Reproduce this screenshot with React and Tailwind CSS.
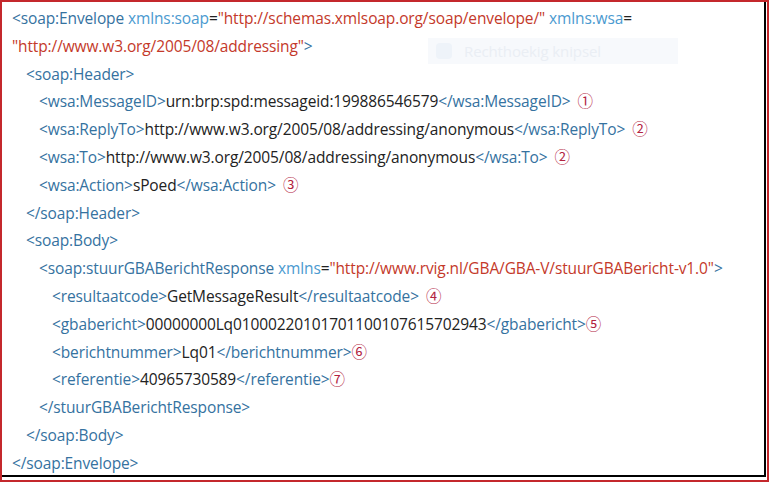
const font = { fontFamily: '"Open Sans", "Noto Sans", "Noto Sans CJK JP", sans-serif' }

function T({ children }) {
  return <span className="text-[#35729f]">{children}</span>
}
function A({ children }) {
  return <span className="text-[#4b9ad0]">{children}</span>
}
function S({ children }) {
  return <span className="text-[#c4392a]">{children}</span>
}
function N({ children, gap = true }) {
  return <span className={`text-[#b3233f] ${gap ? "ml-[7px]" : ""}`}>{children}</span>
}

const pad = ["pl-[10px]", "pl-[24px]", "pl-[37px]", "pl-[50px]"]

function Line({ level, children }) {
  return <div className={`h-[27.8px] leading-[27.8px] whitespace-nowrap ${pad[level]}`}>{children}</div>
}

export default function App() {
  return (
    <div className="w-[769px] h-[482px] bg-white border-2 border-[#c4282c] pr-px pb-[3px]">
      <div
        className="relative w-full h-full border-r-2 border-b-2 border-black text-[15.5px] text-[#222] tracking-[-0.12px] pt-[3px]"
        style={font}
      >
        <div className="absolute left-[426px] top-[36px] w-[250px] h-[26px] bg-[#f7f9fc] flex items-center gap-3 px-2 text-[15px] text-[#eaeef4]">
          <span className="w-4 h-4 bg-[#eef3f9] rounded-sm" />
          Rechthoekig knipsel
        </div>
        <div className="relative">
          <Line level={0}>
            <T>&lt;soap:Envelope </T><A>xmlns:soap</A>=<S>"http://schemas.xmlsoap.org/soap/envelope/"</S> <A>xmlns:wsa</A>=
          </Line>
          <Line level={0}>
            <S>"http://www.w3.org/2005/08/addressing"</S><T>&gt;</T>
          </Line>
          <Line level={1}>
            <T>&lt;soap:Header&gt;</T>
          </Line>
          <Line level={2}>
            <T>&lt;wsa:MessageID&gt;</T>urn:brp:spd:messageid:199886546579<T>&lt;/wsa:MessageID&gt;</T><N>①</N>
          </Line>
          <Line level={2}>
            <T>&lt;wsa:ReplyTo&gt;</T>http://www.w3.org/2005/08/addressing/anonymous<T>&lt;/wsa:ReplyTo&gt;</T><N>②</N>
          </Line>
          <Line level={2}>
            <T>&lt;wsa:To&gt;</T>http://www.w3.org/2005/08/addressing/anonymous<T>&lt;/wsa:To&gt;</T><N>②</N>
          </Line>
          <Line level={2}>
            <T>&lt;wsa:Action&gt;</T>sPoed<T>&lt;/wsa:Action&gt;</T><N>③</N>
          </Line>
          <Line level={1}>
            <T>&lt;/soap:Header&gt;</T>
          </Line>
          <Line level={1}>
            <T>&lt;soap:Body&gt;</T>
          </Line>
          <Line level={2}>
            <T>&lt;soap:stuurGBABerichtResponse </T><A>xmlns</A>=<S>"http://www.rvig.nl/GBA/GBA-V/stuurGBABericht-v1.0"</S><T>&gt;</T>
          </Line>
          <Line level={3}>
            <T>&lt;resultaatcode&gt;</T>GetMessageResult<T>&lt;/resultaatcode&gt;</T><N>④</N>
          </Line>
          <Line level={3}>
            <T>&lt;gbabericht&gt;</T>00000000Lq01000220101701100107615702943<T>&lt;/gbabericht&gt;</T><N gap={false}>⑤</N>
          </Line>
          <Line level={3}>
            <T>&lt;berichtnummer&gt;</T>Lq01<T>&lt;/berichtnummer&gt;</T><N gap={false}>⑥</N>
          </Line>
          <Line level={3}>
            <T>&lt;referentie&gt;</T>40965730589<T>&lt;/referentie&gt;</T><N gap={false}>⑦</N>
          </Line>
          <Line level={2}>
            <T>&lt;/stuurGBABerichtResponse&gt;</T>
          </Line>
          <Line level={1}>
            <T>&lt;/soap:Body&gt;</T>
          </Line>
          <Line level={0}>
            <T>&lt;/soap:Envelope&gt;</T>
          </Line>
        </div>
      </div>
    </div>
  )
}
